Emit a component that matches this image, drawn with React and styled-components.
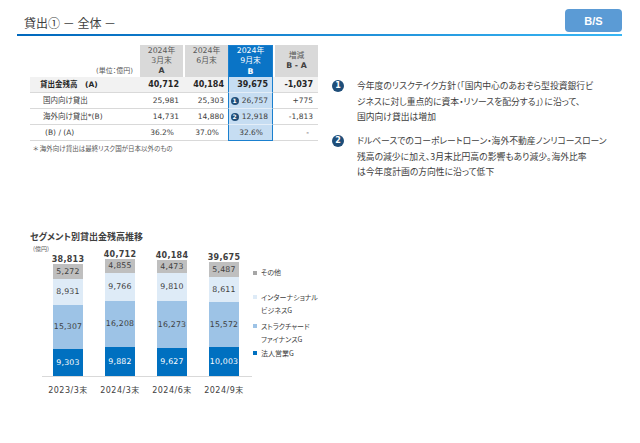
import React from "react";
import styled, { createGlobalStyle } from "styled-components";

const NUM = `"DejaVu Sans", "Noto Sans CJK JP", sans-serif`;
const JP = `"Noto Sans CJK JP", sans-serif`;

const GlobalStyle = createGlobalStyle`
  html, body {
    margin: 0;
    padding: 0;
    background: #fff;
  }
  body {
    width: 640px;
    height: 443px;
    overflow: hidden;
    font-family: ${NUM};
    font-feature-settings: "palt";
    color: #404040;
  }
`;

const tableRows = [
  { label: "貸出金残高　(A)", values: ["40,712", "40,184", "39,675", "-1,037"], total: true, indent: 10 },
  { label: "国内向け貸出", values: ["25,981", "25,303", "26,757", "+775"], badge: 1, indent: 13 },
  { label: "海外向け貸出*(B)", values: ["14,731", "14,880", "12,918", "-1,813"], badge: 2, indent: 13 },
  { label: "(B) / (A)", values: ["36.2%", "37.0%", "32.6%", "-"], ratio: true, indent: 15 },
];

const notes = [
  [
    "今年度のリスクテイク方針（「国内中心のあおぞら型投資銀行ビ",
    "ジネスに対し重点的に資本・リソースを配分する」）に沿って、",
    "国内向け貸出は増加",
  ],
  [
    "ドルベースでのコーポレートローン・海外不動産ノンリコースローン",
    "残高の減少に加え、3月末比円高の影響もあり減少。海外比率",
    "は今年度計画の方向性に沿って低下",
  ],
];

// bottom to top
const segments = [
  { name: ["法人営業G"], color: "#0070C0", mark: "#0070C0", text: "#fff", gap: 0 },
  { name: ["ストラクチャード", "ファイナンスG"], color: "#9DC3E6", mark: "#9DC3E6", text: "#404040", gap: 2 },
  { name: ["インターナショナル", "ビジネスG"], color: "#DEEBF7", mark: "#DEEBF7", text: "#404040", gap: 11 },
  { name: ["その他"], color: "#BFBFBF", mark: "#A6A6A6", text: "#404040", gap: 0 },
];

const bars = [
  { period: "2023/3末", total: "38,813", values: [9303, 15307, 8931, 5272] },
  { period: "2024/3末", total: "40,712", values: [9882, 16208, 9766, 4855] },
  { period: "2024/6末", total: "40,184", values: [9627, 16273, 9810, 4473] },
  { period: "2024/9末", total: "39,675", values: [10003, 15572, 8611, 5487] },
];

const SCALE = 112 / 38813;

export default function App() {
  return (
    <Page>
      <GlobalStyle />
      <Header>
        <Title>貸出① － 全体 －</Title>
        <TagButton>B/S</TagButton>
      </Header>

      <TopRow>
        <TableBlock>
          <Table>
            <colgroup>
              <col style={{ width: 108 }} />
              <col style={{ width: 45 }} />
              <col style={{ width: 45 }} />
              <col style={{ width: 45 }} />
              <col style={{ width: 45 }} />
            </colgroup>
            <thead>
              <tr>
                <UnitHead>(単位：億円)</UnitHead>
                <HeadCell>
                  2024年<br />3月末<br /><b>A</b>
                </HeadCell>
                <HeadCell>
                  2024年<br />6月末<br />&nbsp;
                </HeadCell>
                <HeadCell $hl>
                  2024年<br />9月末<br /><b>B</b>
                </HeadCell>
                <HeadCell>
                  増減<br /><b>B - A</b>
                </HeadCell>
              </tr>
            </thead>
            <tbody>
              {tableRows.map((row, r) => (
                <tr key={row.label}>
                  <LabelCell $total={row.total} $indent={row.indent}>
                    {row.label}
                  </LabelCell>
                  {row.values.map((v, i) => (
                    <Cell
                      key={i}
                      $total={row.total}
                      $hl={i === 2}
                      $last={r === tableRows.length - 1}
                      $pad={row.ratio ? 9 : i === 3 ? 5 : 4}
                    >
                      {i === 2 && row.badge ? (
                        <BadgeWrap>
                          <SmallBadge>{row.badge}</SmallBadge>
                          <span>{v}</span>
                        </BadgeWrap>
                      ) : (
                        v
                      )}
                    </Cell>
                  ))}
                </tr>
              ))}
            </tbody>
          </Table>
          <Footnote>＊ 海外向け貸出は最終リスク国が日本以外のもの</Footnote>
        </TableBlock>

        <Notes>
          {notes.map((lines, i) => (
            <NoteItem key={i} $first={i === 0}>
              <NoteBadge>{i + 1}</NoteBadge>
              <NoteText>
                {lines.map((l) => (
                  <NoteLine key={l}>{l}</NoteLine>
                ))}
              </NoteText>
            </NoteItem>
          ))}
        </Notes>
      </TopRow>

      <ChartSection>
        <ChartTitle>セグメント別貸出金残高推移</ChartTitle>
        <Unit>(億円)</Unit>
        <ChartBody>
          <PlotArea>
            <Plot>
              {bars.map((bar) => (
                <BarColumn key={bar.period}>
                  <Total>{bar.total}</Total>
                  <Stack>
                    {bar.values.map((v, i) => (
                      <Segment
                        key={i}
                        $color={segments[i].color}
                        $text={segments[i].text}
                        style={{ height: v * SCALE }}
                      >
                        {v.toLocaleString("en-US")}
                      </Segment>
                    ))}
                  </Stack>
                </BarColumn>
              ))}
            </Plot>
            <Axis>
              {bars.map((bar) => (
                <Period key={bar.period}>{bar.period}</Period>
              ))}
            </Axis>
          </PlotArea>
          <Legend>
            {[...segments].reverse().map((s) => (
              <LegendItem key={s.name[0]} $gap={s.gap}>
                <LegendMark $color={s.mark} />
                <LegendText>
                  {s.name.map((n) => (
                    <div key={n}>{n}</div>
                  ))}
                </LegendText>
              </LegendItem>
            ))}
          </Legend>
        </ChartBody>
      </ChartSection>
    </Page>
  );
}

const Page = styled.div`
  width: 640px;
  height: 443px;
  position: relative;
`;

const Header = styled.header`
  margin: 0 18px 0 17px;
  height: 36px;
  padding-bottom: 2px;
  box-sizing: border-box;
  display: flex;
  align-items: flex-end;
  justify-content: space-between;
  border-bottom: 2px solid #0a70c2;
  border-image: linear-gradient(90deg, #0068bd, #1f8fd8 55%, #38b6f4) 1;
`;

const Title = styled.h1`
  margin: 0 0 1px 7px;
  font-family: ${JP};
  font-size: 12px;
  font-weight: 400;
  line-height: 16px;
  color: #404040;
`;

const TagButton = styled.div`
  width: 57px;
  height: 23px;
  border-radius: 4px;
  background: #5b9bd5;
  color: #fff;
  font-family: "Liberation Sans", Arial, sans-serif;
  font-weight: 700;
  font-size: 11px;
  display: flex;
  align-items: center;
  justify-content: center;
`;

const TopRow = styled.section`
  display: flex;
  align-items: flex-start;
  margin-top: 9px;
  padding-left: 30px;
`;

const TableBlock = styled.div`
  width: 288px;
`;

const Table = styled.table`
  table-layout: fixed;
  width: 288px;
  border-collapse: separate;
  border-spacing: 0;
  font-size: 7.5px;
  color: #404040;
`;

const UnitHead = styled.th`
  height: 31px;
  padding: 0 5px 1px 0;
  text-align: right;
  vertical-align: bottom;
  font-weight: 400;
  font-size: 7px;
  line-height: 10px;
  color: #595959;
`;

const HeadCell = styled.th`
  padding: 0;
  height: 31px;
  box-sizing: border-box;
  text-align: center;
  vertical-align: middle;
  font-weight: 400;
  line-height: 10.3px;
  font-size: 7.8px;
  background-clip: padding-box;
  background-color: ${(p) => (p.$hl ? "#0a74c6" : "#d9d9d9")};
  color: ${(p) => (p.$hl ? "#fff" : "#595959")};
  border-left: ${(p) => (p.$hl ? "1.5px solid #1a80cf" : "2px solid #fff")};
  border-right: ${(p) => (p.$hl ? "1.5px solid #1a80cf" : "0")};
  border-top: ${(p) => (p.$hl ? "1.5px solid #1a80cf" : "0")};

  b {
    font-weight: 700;
    color: ${(p) => (p.$hl ? "#fff" : "#404040")};
  }
`;

const LabelCell = styled.td`
  height: 15px;
  padding: 0 0 0 ${(p) => p.$indent}px;
  white-space: nowrap;
  border-bottom: 1px solid #d9d9d9;
  background: ${(p) => (p.$total ? "#f2f2f2" : "transparent")};
  font-weight: ${(p) => (p.$total ? 700 : 400)};
  font-size: 7.5px;
  color: ${(p) => (p.$total ? "#262626" : "#404040")};
  line-height: 15px;
`;

const Cell = styled.td`
  height: 15px;
  padding: 0 ${(p) => p.$pad}px 0 0;
  text-align: right;
  white-space: nowrap;
  line-height: 15px;
  font-weight: ${(p) => (p.$total ? 700 : 400)};
  font-size: ${(p) => (p.$total ? "8px" : "7.5px")};
  color: ${(p) => (p.$total ? "#262626" : "#404040")};
  background: ${(p) => (p.$hl ? "#c6ddf2" : p.$total ? "#f2f2f2" : "transparent")};
  border-bottom: ${(p) =>
    p.$hl && p.$last ? "1.5px solid #1a80cf" : p.$hl ? "1px solid #e4eef8" : "1px solid #d9d9d9"};
  border-left: ${(p) => (p.$hl ? "1.5px solid #1a80cf" : "0")};
  border-right: ${(p) => (p.$hl ? "1.5px solid #1a80cf" : "0")};
`;

const BadgeWrap = styled.span`
  display: flex;
  align-items: center;
  justify-content: space-between;
  padding-left: 1.5px;
`;

const SmallBadge = styled.span`
  width: 8px;
  height: 8px;
  border-radius: 50%;
  background: #1f4e79;
  color: #fff;
  font-size: 6px;
  font-weight: 700;
  line-height: 8px;
  text-align: center;
`;

const Footnote = styled.p`
  margin: 3px 0 0 3px;
  font-family: ${JP};
  font-size: 6.5px;
  line-height: 9px;
  color: #595959;
`;

const Notes = styled.ul`
  list-style: none;
  margin: 0 0 0 14px;
  padding: 33px 0 0;
`;

const NoteItem = styled.li`
  display: flex;
  align-items: flex-start;
  margin-top: ${(p) => (p.$first ? 0 : 8.5)}px;
`;

const NoteBadge = styled.span`
  flex: none;
  width: 12px;
  height: 12px;
  margin-top: 1.75px;
  border-radius: 50%;
  background: #1f4e79;
  color: #fff;
  font-family: "DejaVu Sans", sans-serif;
  font-weight: 700;
  font-size: 8px;
  line-height: 12px;
  text-align: center;
`;

const NoteText = styled.div`
  margin-left: 13px;
  font-family: ${JP};
  font-size: 8.8px;
  line-height: 15.5px;
  color: #404040;
`;

const NoteLine = styled.div`
  white-space: nowrap;
`;

const ChartSection = styled.section`
  margin: 51px 0 0 30px;
`;

const ChartTitle = styled.h2`
  margin: 0;
  font-family: ${JP};
  font-size: 9px;
  font-weight: 700;
  line-height: 11px;
  color: #404040;
`;

const Unit = styled.div`
  margin: 3.5px 0 0 3px;
  font-family: ${JP};
  font-size: 6px;
  line-height: 8px;
  color: #595959;
`;

const ChartBody = styled.div`
  display: flex;
  align-items: flex-start;
  margin-top: -4px;
`;

const PlotArea = styled.div`
  margin-left: 12px;
  width: 210px;
`;

const Plot = styled.div`
  height: 127px;
  display: flex;
  align-items: flex-end;
  border-bottom: 1px solid #d9d9d9;
`;

const BarColumn = styled.div`
  width: 52px;
  display: flex;
  flex-direction: column;
  align-items: center;
`;

const Total = styled.div`
  font-size: 8px;
  font-weight: 700;
  line-height: 9px;
  color: #404040;
  letter-spacing: 0.3px;
`;

const Stack = styled.div`
  width: 30px;
  display: flex;
  flex-direction: column-reverse;
`;

const Segment = styled.div`
  display: flex;
  align-items: center;
  justify-content: center;
  background: ${(p) => p.$color};
  color: ${(p) => p.$text};
  font-size: 7.8px;
  line-height: 1;
  letter-spacing: 0.2px;
  white-space: nowrap;
`;

const Axis = styled.div`
  display: flex;
  margin-top: 9px;
`;

const Period = styled.div`
  width: 52px;
  text-align: center;
  font-size: 8px;
  line-height: 10px;
  letter-spacing: 0.5px;
  color: #404040;
`;

const Legend = styled.div`
  margin-left: 1px;
  padding-top: 17px;
`;

const LegendItem = styled.div`
  display: flex;
  align-items: flex-start;
  margin-top: ${(p) => p.$gap}px;
`;

const LegendMark = styled.span`
  flex: none;
  width: 4px;
  height: 4px;
  margin-top: 4.75px;
  background: ${(p) => p.$color};
`;

const LegendText = styled.div`
  margin-left: 4px;
  font-family: ${JP};
  font-size: 7px;
  line-height: 13.5px;
  color: #404040;
  white-space: nowrap;
`;
